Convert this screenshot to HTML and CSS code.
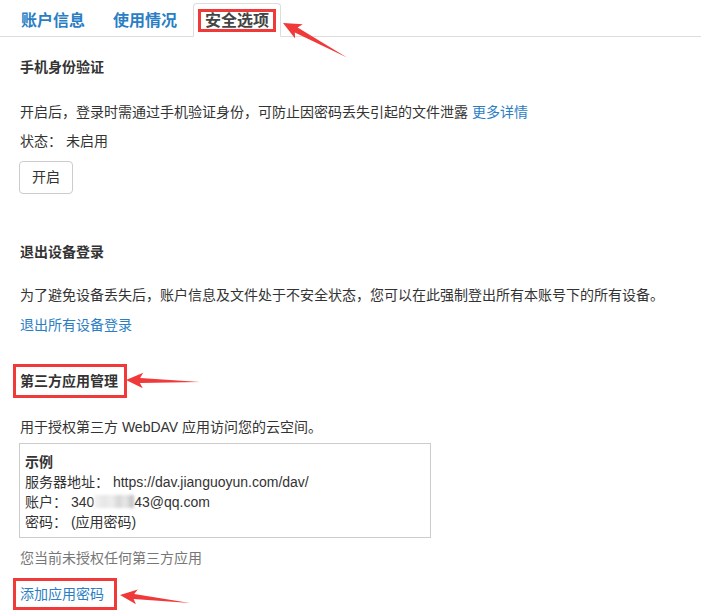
FILE: index.html
```html
<!DOCTYPE html>
<html lang="zh-CN">
<head>
<meta charset="utf-8">
<title>安全选项</title>
<link rel="stylesheet" href="styles.css">
</head>
<body>
<div class="page">
  <nav class="tabs">
    <a class="tab">账户信息</a>
    <a class="tab">使用情况</a>
    <a class="tab active"><span class="mark tab-mark">安全选项</span></a>
  </nav>

  <main class="content">
    <section class="sec sec-phone">
      <h4 class="title">手机身份验证</h4>
      <p class="text gap-25">开启后，登录时需通过手机验证身份，可防止因密码丢失引起的文件泄露 <a class="link">更多详情</a></p>
      <p class="text gap-9">状态： 未启用</p>
      <button class="btn">开启</button>
    </section>

    <section class="sec sec-logout">
      <h4 class="title">退出设备登录</h4>
      <p class="text gap-23">为了避免设备丢失后，账户信息及文件处于不安全状态，您可以在此强制登出所有本账号下的所有设备。</p>
      <p class="text gap-10"><a class="link">退出所有设备登录</a></p>
    </section>

    <section class="sec sec-apps">
      <h4 class="title"><span class="mark title-mark">第三方应用管理</span></h4>
      <p class="text gap-19">用于授权第三方 WebDAV 应用访问您的云空间。</p>
      <div class="example">
        <div class="ex-title">示例</div>
        <div>服务器地址： https://dav.jianguoyun.com/dav/</div>
        <div>账户： 340<span class="blur"></span>43@qq.com</div>
        <div>密码： (应用密码)</div>
      </div>
      <p class="text muted gap-10">您当前未授权任何第三方应用</p>
      <p class="add"><a class="link mark link-mark">添加应用密码</a></p>
    </section>
  </main>

  <svg class="arrows" width="701" height="616" viewBox="0 0 701 616" aria-hidden="true">
    <polygon points="283,23 302.7,24.3 297.6,27.4 347,57.5 294.8,32.6 295.1,38.5"/>
    <polygon points="126,380 143.2,372.8 140.1,377.9 200,382 139.9,382.9 142.8,388.2"/>
    <polygon points="120,595 137.8,589.5 134.2,594.1 190,603 133.6,599.1 136,604.3"/>
  </svg>
</div>
</body>
</html>
```

FILE: styles.css
```css
* {
  box-sizing: border-box;
}

html, body {
  margin: 0;
  padding: 0;
  background: #fff;
}

body {
  font-family: "Liberation Sans", "Noto Sans CJK SC", sans-serif;
  font-size: 14px;
  line-height: 20px;
  color: #333;
}

.page {
  position: relative;
  width: 701px;
  height: 616px;
  overflow: hidden;
}

.tabs {
  display: flex;
  gap: 4px;
  padding: 3px 0 0 9px;
  border-bottom: 1px solid #ddd;
}

.tab {
  height: 34px;
  margin-bottom: -1px;
  display: flex;
  align-items: center;
  padding: 0 11px;
  border: 1px solid transparent;
  border-radius: 4px 4px 0 0;
  font-size: 16px;
  font-weight: bold;
  line-height: 17px;
  color: #2a7ec4;
}

.tab.active {
  padding: 0 4px;
  background: #fff;
  border-color: #ddd;
  border-bottom-color: transparent;
  color: #444;
}

.mark {
  display: inline-block;
  border: 3px solid #f03a3a;
}

.tab-mark {
  padding: 0 4px;
  line-height: 17px;
}

.content {
  padding: 0 20px;
}

.sec {
  display: flex;
  flex-direction: column;
  align-items: flex-start;
}

.sec-phone {
  padding-top: 20px;
}

.sec-logout {
  padding-top: 48px;
}

.sec-apps {
  padding-top: 29px;
}

.title {
  margin: 0;
  font-size: 14px;
  font-weight: bold;
  line-height: 20px;
  color: #333;
}

.title-mark {
  margin-left: -7px;
  padding: 4px 6px 4px 4px;
}

.text {
  margin: 0;
}

.gap-25 { margin-top: 25px; }
.gap-23 { margin-top: 23px; }
.gap-19 { margin-top: 19px; }
.gap-10 { margin-top: 10px; }
.gap-9 { margin-top: 9px; }

.muted {
  color: #777;
}

.link {
  color: #2a7ec4;
  text-decoration: none;
  cursor: pointer;
}

.btn {
  margin-top: 10px;
  margin-left: -1px;
  padding: 5px 12px;
  font-family: inherit;
  font-size: 14px;
  line-height: 21px;
  color: #333;
  background: #fff;
  border: 1px solid #ccc;
  border-radius: 4px;
}

.example {
  margin-top: 6px;
  margin-left: -1px;
  width: 412px;
  padding: 8px 5px 5px;
  border: 1px solid #ccc;
}

.ex-title {
  font-weight: bold;
}

.blur {
  display: inline-block;
  width: 40px;
  height: 13px;
  vertical-align: -1px;
  background: linear-gradient(90deg, #f5f5f5 0%, #e6e6e6 25%, #eeeeee 45%, #d6d6d6 62%, #e8e8e8 78%, #bdbdbd 100%);
  filter: blur(1.5px);
}

.add {
  margin: 10px 0 0;
}

.link-mark {
  margin-left: -7px;
  padding: 3px 10px 3px 4px;
}

.arrows {
  position: absolute;
  top: 0;
  left: 0;
  pointer-events: none;
  fill: #f03a3a;
}
```
